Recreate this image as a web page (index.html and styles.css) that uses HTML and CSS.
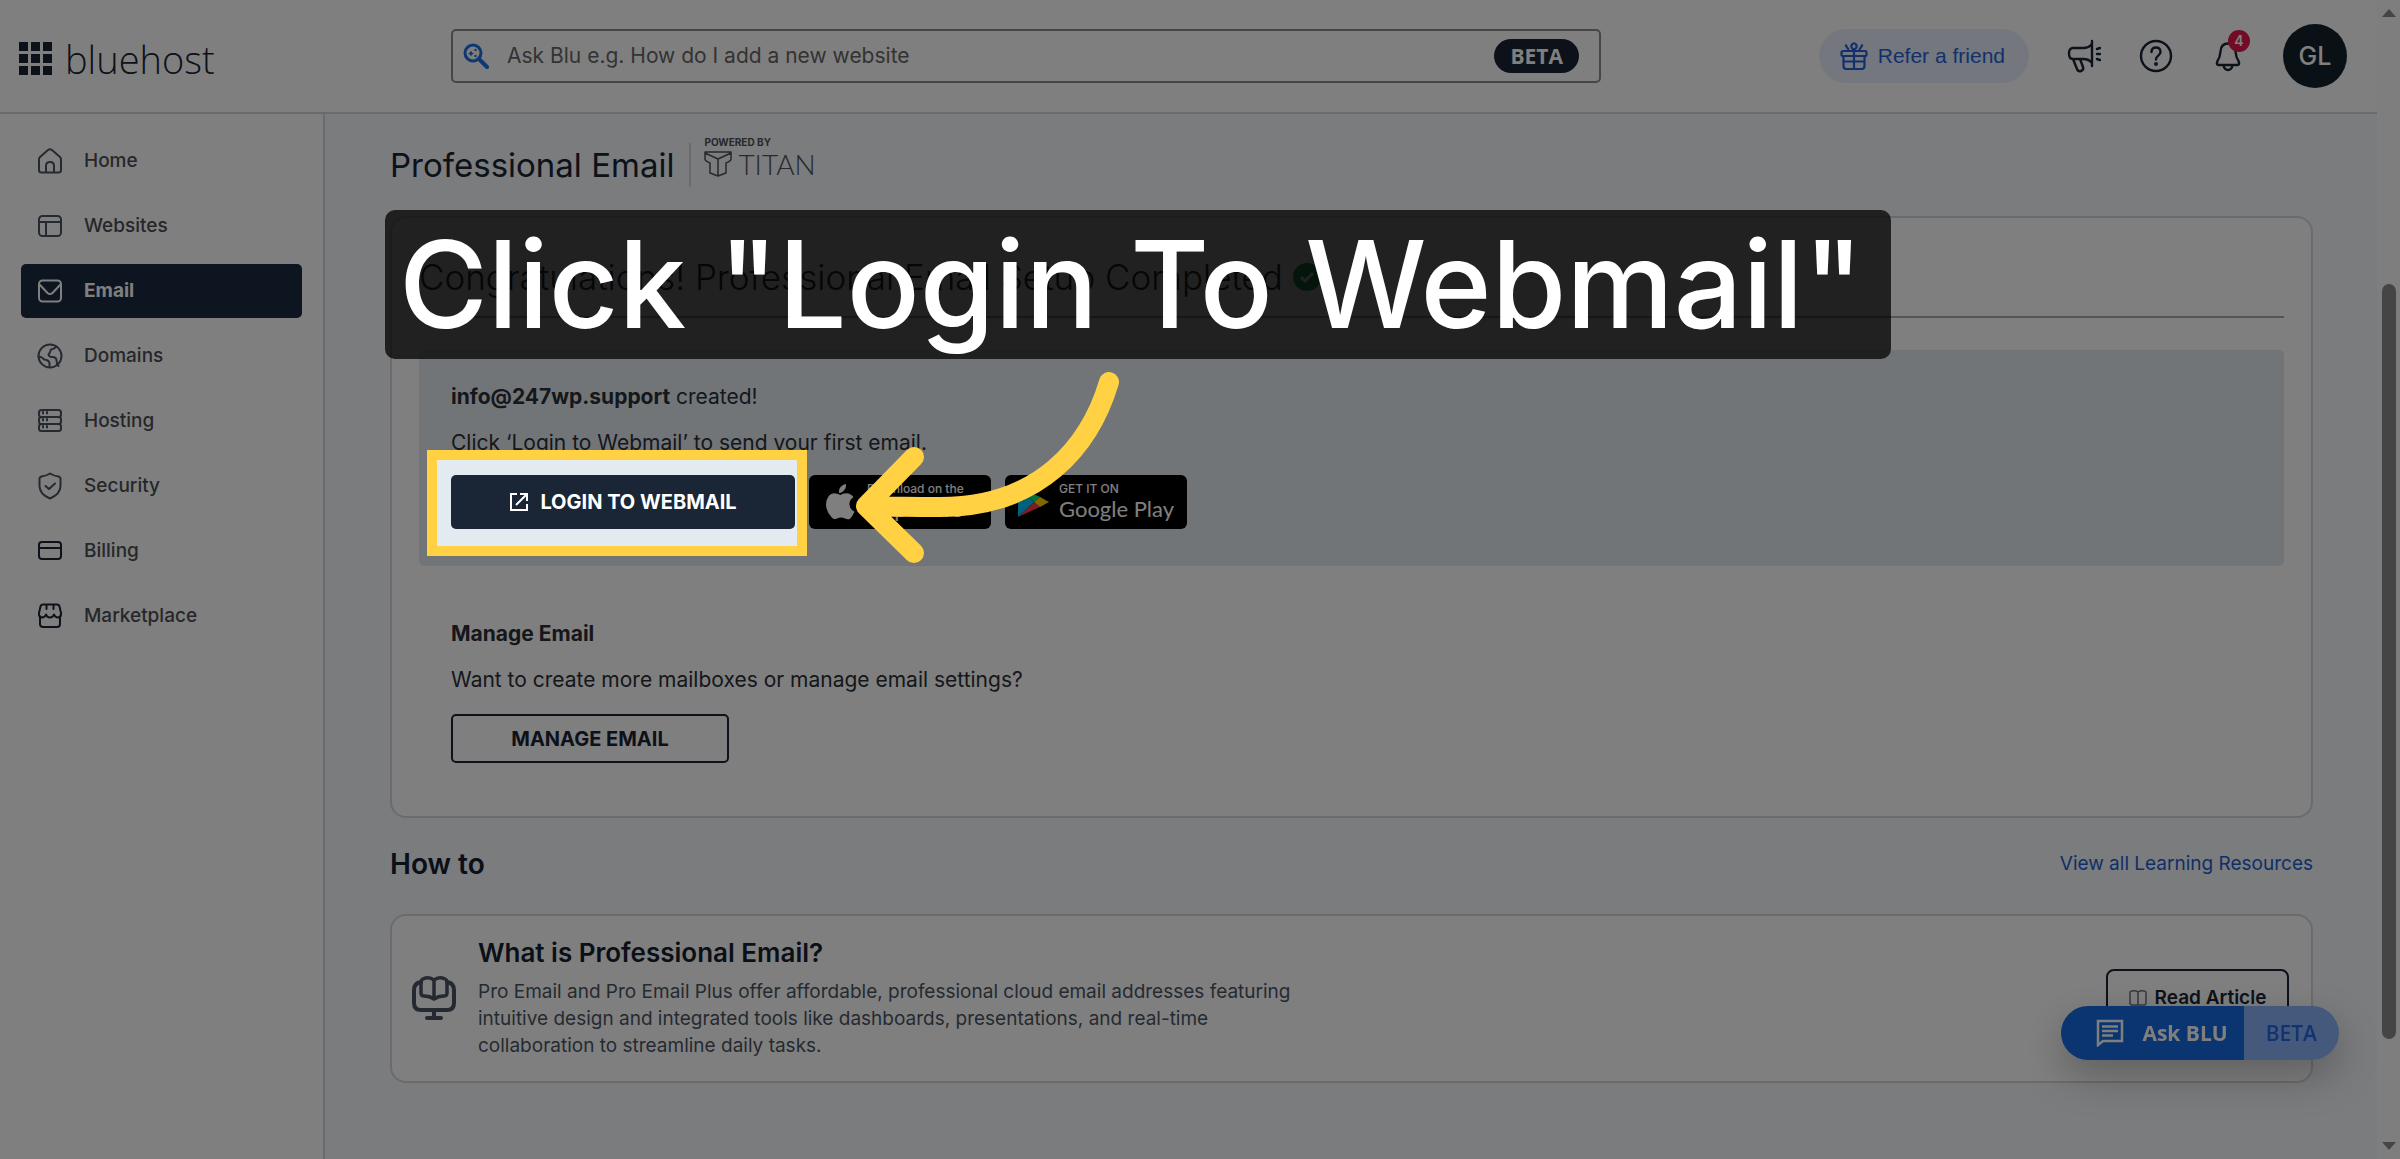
FILE: index.html
```html
<!DOCTYPE html>
<html lang="en">
<head>
  <meta charset="UTF-8">
  <meta name="viewport" content="width=device-width, initial-scale=1.0">
  <title>Professional Email</title>
  <link rel="stylesheet" href="styles.css">
</head>
<body>
  <header class="header">
    <a href="#" class="logo">
      <svg width="33" height="33" viewBox="0 0 33 33" fill="currentColor" aria-hidden="true">
        <path d="M0 0h9v9H0zM12 0h9v9h-9zM24 0h9v9h-9zM0 12h9v9H0zM12 12h9v9h-9zM24 12h9v9h-9zM0 24h9v9H0zM12 24h9v9h-9zM24 24h9v9h-9z"/>
      </svg>
      <span>bluehost</span>
    </a>

    <form class="search">
      <svg width="26" height="26" viewBox="0 0 26 26" fill="none" stroke="#1f6fe5" stroke-width="3" aria-hidden="true">
        <circle cx="10" cy="10" r="8"/>
        <path d="M16 16l8 8" stroke-width="4" stroke-linecap="round"/>
        <path d="M8 7.500l1 2 2 1-2 1-1 2-1-2-2-1 2-1z" fill="#1f6fe5" stroke="none"/>
        <circle cx="12.500" cy="7" r="1.200" fill="#1f6fe5" stroke="none"/>
        <circle cx="12.500" cy="13" r="1.200" fill="#1f6fe5" stroke="none"/>
      </svg>
      <input type="text" aria-label="Ask Blu" placeholder="Ask Blu e.g. How do I add a new website">
      <span class="beta-pill">BETA</span>
    </form>

    <div class="header-actions">
      <button class="refer">
        <svg width="28" height="28" viewBox="0 0 28 28" fill="none" stroke="currentColor" stroke-width="2.200" stroke-linejoin="round" aria-hidden="true">
          <rect x="1.500" y="9" width="25" height="5" rx="1.500"/>
          <path d="M3.500 14v10q0 3 3 3h15q3 0 3-3V14M14 9v18M3.500 19.500h21M14 8q-4-3-2-5.500 2-2.500 4 0Q18 5 14 8zM9 8Q7 6 5.500 2.500M19 8q2-2 3.500-5.500"/>
        </svg>
        Refer a friend
      </button>
      <button class="icon-btn" aria-label="Announcements">
        <svg width="34" height="34" viewBox="0 0 34 34" fill="none" stroke="currentColor" stroke-width="2.400" stroke-linejoin="round" stroke-linecap="round" aria-hidden="true">
          <path d="M25 2v25M25 5q-3 4-9 4H6q-4 0-4 5.500T6 20h10q6 0 9 4M6 20l4 10q1 3 4 2t2-4l-3-8"/>
          <path d="M30 10l3-1M30 15h3M30 20l3 1"/>
        </svg>
      </button>
      <button class="icon-btn" aria-label="Help">
        <svg width="34" height="34" viewBox="0 0 34 34" fill="none" stroke="currentColor" stroke-width="2.400" stroke-linecap="round" aria-hidden="true">
          <circle cx="17" cy="17" r="15"/>
          <path d="M12.500 13q0-4.500 4.500-4.500t4.500 4.500q0 2-2.200 3.600T17 20.500"/>
          <circle cx="17" cy="25" r=".8" fill="currentColor"/>
        </svg>
      </button>
      <button class="icon-btn bell" aria-label="Notifications">
        <svg width="26" height="32" viewBox="0 0 26 32" fill="none" stroke="currentColor" stroke-width="2.400" stroke-linejoin="round" aria-hidden="true">
          <path d="M13 3.500q-7 0-7.500 8-.5 6-3 9.500-1.500 4 1 4h19q2.500 0 1-4-2.500-3.500-3-9.500-.5-8-7.500-8zM8.500 25.500q1 4.500 4.500 4.500t4.500-4.500"/>
        </svg>
        <span class="badge">4</span>
      </button>
      <button class="avatar">GL</button>
    </div>
  </header>

  <div class="layout">
    <nav class="sidebar">
      <a href="#" class="nav-item">
        <svg width="26" height="26" viewBox="0 0 26 26" aria-hidden="true"><path d="M2 11.500Q2 10 3 9l8-7q2-1.600 4 0l8 7q1 1 1 2.500V22q0 2.500-2.500 2.500h-17Q2 24.500 2 22zM9 24v-6q0-4 4-4t4 4v6"/></svg>
        Home
      </a>
      <a href="#" class="nav-item">
        <svg width="26" height="26" viewBox="0 0 26 26" aria-hidden="true"><rect x="2" y="3" width="22" height="20" rx="3.500"/><path d="M2 9h22M9 9v14"/></svg>
        Websites
      </a>
      <a href="#" class="nav-item active">
        <svg width="26" height="26" viewBox="0 0 26 26" aria-hidden="true"><rect x="2" y="2.500" width="22" height="21" rx="3.500"/><path d="M3 7l7.500 8q2.500 2 5 0L23 7"/></svg>
        Email
      </a>
      <a href="#" class="nav-item">
        <svg width="26" height="26" viewBox="0 0 26 26" aria-hidden="true"><circle cx="13" cy="13" r="11.500"/><path d="M19 4q-2 2-5 2.500-1 3.500-2.500 5 1 3 4 2.500 4 0 4 3.500t2 5.500M1.500 13.500q4 .5 5.500 3 5 .5 5.500 3.500V24"/></svg>
        Domains
      </a>
      <a href="#" class="nav-item">
        <svg width="26" height="26" viewBox="0 0 26 26" aria-hidden="true"><rect x="2" y="2" width="22" height="7" rx="2.500"/><rect x="2" y="9" width="22" height="7" rx="2.500"/><rect x="2" y="16" width="22" height="7" rx="2.500"/><path d="M6 4v1.500M10 4v1.500M6 11v1.500M10 11v1.500M6 18v1.500M10 18v1.500"/></svg>
        Hosting
      </a>
      <a href="#" class="nav-item">
        <svg width="26" height="28" viewBox="0 0 26 28" aria-hidden="true"><path d="M13 1.500Q9 4 4.500 4.500 2.500 5 2.500 7v7q0 8 10.500 12.500Q23.500 22 23.500 14V7q0-2-2-2.500Q17 4 13 1.500zM8.500 14l3.500 3 6-5.500"/></svg>
        Security
      </a>
      <a href="#" class="nav-item dark">
        <svg width="26" height="26" viewBox="0 0 26 26" aria-hidden="true"><rect x="2" y="4" width="22" height="17" rx="3"/><path d="M2 10h22"/></svg>
        Billing
      </a>
      <a href="#" class="nav-item dark">
        <svg width="26" height="26" viewBox="0 0 26 26" aria-hidden="true"><path d="M6 1.500h14q2 0 2.500 2L24 10q.5 4-3 4.500-3 0-4-3-1 3-4 3t-4-3q-1 3-4 3Q1.500 14 2 10l1.500-6.500q.5-2 2.500-2zM3 14v7q0 3 3 3h14q3 0 3-3v-7M9.500 2v4M16.500 2v4"/></svg>
        Marketplace
      </a>
    </nav>

    <main class="main">
      <div class="title-row">
        <h1>Professional Email</h1>
        <div class="powered">
          <span class="powered-label">POWERED BY</span>
          <span class="titan">
            <svg width="28" height="26" viewBox="0 0 28 26" fill="none" stroke="currentColor" stroke-width="1.500" stroke-linejoin="round" aria-hidden="true">
              <path d="M1 1h26v7q0 2-5 4v10l-8 3-8-3V12Q1 10 1 8zM1 2l13 6 13-6M14 8v17"/>
            </svg>
            TITAN
          </span>
        </div>
      </div>

      <section class="card setup">
        <h2 class="setup-title">
          Congratulations! Professional Email Setup Completed
          <svg width="28" height="28" viewBox="0 0 28 28" aria-hidden="true"><circle cx="14" cy="14" r="14" fill="#23a455"/><path d="M8 14l4 4 8-8" fill="none" stroke="#fff" stroke-width="3"/></svg>
        </h2>
        <div class="created">
          <p><strong>info@247wp.support</strong> created!</p>
          <p>Click ‘Login to Webmail’ to send your first email.</p>
          <div class="buttons">
            <div class="spotlight">
              <button class="btn btn-login">
                <svg width="20" height="20" viewBox="0 0 20 20" fill="none" stroke="currentColor" stroke-width="2" aria-hidden="true"><path d="M8 2H2v16h16v-6M11 2h7v7M18 2L7 13"/></svg>
                LOGIN TO WEBMAIL
              </button>
            </div>
            <a href="#" class="store">
              <svg width="30" height="36" viewBox="0 0 30 36" fill="currentColor" aria-hidden="true"><path d="M21 0q.5 4-2 6.500T14 9q-.5-4 2-6.500T21 0zM15.500 11q2-1.800 6-1.800 4.500.3 7 4-4.500 2.800-4 7.500.5 5 5 7-2 4.500-4.500 7Q23 36 20 34.500q-4-1.800-8 0-3 1.500-5-.8Q1 27.500 1 20.500 1.500 10 9 9.200q3.500 0 6.500 1.800z"/></svg>
              <span><small>Download on the</small><b>App Store</b></span>
            </a>
            <a href="#" class="store store-google">
              <svg width="32" height="32" viewBox="0 0 32 32" aria-hidden="true"><path d="M1 1v30l16-15z" fill="#00c3ff"/><path d="M1 1l16 15 6-5z" fill="#00e676"/><path d="M1 31l16-15 6 5z" fill="#ff3a44"/><path d="M23 11l-6 5 6 5 9-5z" fill="#ffd000"/></svg>
              <span><small>GET IT ON</small><b>Google Play</b></span>
            </a>
          </div>
        </div>
        <div class="manage">
          <h3>Manage Email</h3>
          <p>Want to create more mailboxes or manage email settings?</p>
          <button class="btn btn-outline">MANAGE EMAIL</button>
        </div>
      </section>

      <div class="howto-row">
        <h2>How to</h2>
        <a href="#">View all Learning Resources</a>
      </div>

      <article class="card article">
        <svg class="article-icon" width="46" height="46" viewBox="0 0 46 46" fill="none" stroke="currentColor" stroke-width="4" stroke-linejoin="round" stroke-linecap="round" aria-hidden="true">
          <path d="M10 7q-7 1-7 8v13q0 7 7 7h26q7 0 7-7V15q0-7-7-8M23 35v8M16 43h14"/>
          <path d="M23 5q-5-4-11-1-2 1-2 3v11q0 3 3 3 6 0 10 3 4-3 10-3 3 0 3-3V7q0-2-2-3-6-3-11 1zM23 5v19" stroke-width="3.500"/>
        </svg>
        <div class="article-text">
          <h3>What is Professional Email?</h3>
          <p>Pro Email and Pro Email Plus offer affordable, professional cloud email addresses featuring intuitive design and integrated tools like dashboards, presentations, and real-time collaboration to streamline daily tasks.</p>
        </div>
        <button class="read-btn">
          <svg width="18" height="18" viewBox="0 0 18 18" fill="none" stroke="#6b7280" stroke-width="1.500" aria-hidden="true"><path d="M9 3Q6 1 3 2 1 2 1 4v10q0 2 2 2h12q2 0 2-2V4q0-2-2-2-3-1-6 1v13"/></svg>
          Read Article
        </button>
      </article>
    </main>
  </div>

  <button class="ask-blu">
    <span class="ask-label">
      <svg width="28" height="28" viewBox="0 0 28 28" fill="none" stroke="currentColor" stroke-width="2.500" aria-hidden="true"><path d="M2 2h24v20H7l-5 4zM6 7.500h16M6 12h16M6 16.500h11"/></svg>
      Ask BLU
    </span>
    <span class="ask-beta">BETA</span>
  </button>

  <div class="scrollbar">
    <span class="arrow-up"></span>
    <span class="thumb"></span>
    <span class="arrow-down"></span>
  </div>

  <div class="caption">Click "Login To Webmail"</div>
  <svg class="pointer" width="280" height="220" viewBox="0 0 280 220" fill="none" stroke="#ffd143" stroke-width="20" stroke-linecap="round" stroke-linejoin="round" aria-hidden="true">
    <path d="M259 22C240 86 190 147 90 147Q55 147 16 146M64 97L16 146l48 47"/>
  </svg>
</body>
</html>
```

FILE: styles.css
```css
:root {
  --navy: #1a2535;
  --text: #2b2f36;
  --muted: #4b5563;
  --blue: #1f5fd0;
  --border: #d5d6df;
  --page-bg: #f6f8fc;
  --yellow: #ffd143;
}

* {
  box-sizing: border-box;
}

body {
  margin: 0;
  min-height: 100vh;
  padding-right: 23px;
  display: flex;
  flex-direction: column;
  font-family: Inter, "Liberation Sans", sans-serif;
  font-size: 21px;
  line-height: 28px;
  color: var(--text);
  background-color: #fff;
  overflow: hidden;
}

h1, h2, h3, p {
  margin: 0;
}

a {
  text-decoration: none;
  color: inherit;
}

button {
  font: inherit;
  color: inherit;
  cursor: pointer;
}

svg {
  flex-shrink: 0;
}

/* Header */
.header {
  display: flex;
  align-items: center;
  padding: 24px 30px 24px 19px;
  border-bottom: 2px solid var(--border);
}

.logo {
  width: 432px;
  display: flex;
  align-items: center;
  gap: 13px;
  padding-top: 5px;
  color: var(--navy);
  font-family: "Open Sans", sans-serif;
  font-size: 38px;
  font-weight: 300;
}

.search {
  flex: 0 1 1150px;
  height: 54px;
  display: flex;
  align-items: center;
  gap: 18px;
  padding: 0 20px 0 10px;
  border: 2px solid #8b8d91;
  border-radius: 5px;
}

.search input {
  flex: 1;
  border: none;
  outline: none;
  padding: 0;
  font: inherit;
  background: none;
}

.search input::placeholder {
  color: #666;
  opacity: 1;
}

.beta-pill {
  padding: 3px 16px;
  border-radius: 17px;
  background-color: var(--navy);
  color: #fff;
  font-family: "Open Sans", sans-serif;
  font-weight: 700;
  font-size: 21px;
}

.header-actions {
  margin-left: auto;
  display: flex;
  align-items: center;
  color: var(--navy);
}

.refer {
  display: flex;
  align-items: center;
  gap: 10px;
  height: 54px;
  padding: 0 24px 0 21px;
  margin-right: 38px;
  border: none;
  border-radius: 27px;
  background-color: #e8effc;
  color: #2563d9;
  font-family: "Liberation Sans", sans-serif;
}

.icon-btn {
  display: flex;
  padding: 0;
  border: none;
  background: none;
  margin-right: 38px;
}

.bell {
  position: relative;
  margin: 0 42px 0 4px;
}

.badge {
  position: absolute;
  top: -10px;
  right: -9px;
  width: 22px;
  height: 22px;
  border-radius: 50%;
  background-color: #e3174c;
  color: #fff;
  font-size: 14px;
  font-weight: 600;
  line-height: 22px;
}

.avatar {
  width: 64px;
  height: 64px;
  padding: 0;
  border: none;
  border-radius: 50%;
  background-color: #12232d;
  color: #fff;
  font-size: 25px;
  font-weight: 500;
}

/* Sidebar */
.layout {
  flex: 1;
  display: flex;
}

.sidebar {
  flex: 0 0 325px;
  display: flex;
  flex-direction: column;
  gap: 11px;
  padding: 20px 21px;
  border-right: 2px solid var(--border);
}

.nav-item {
  display: flex;
  align-items: center;
  gap: 21px;
  height: 54px;
  padding: 0 16px;
  border-radius: 5px;
  font-size: 19px;
  font-weight: 500;
  color: #4d4f55;
}

.nav-item svg {
  fill: none;
  stroke: var(--muted);
  stroke-width: 2;
  stroke-linejoin: round;
  stroke-linecap: round;
}

.nav-item.dark svg {
  stroke: var(--navy);
}

.nav-item.active {
  background-color: #1b2a42;
  color: #fff;
  font-weight: 700;
}

.nav-item.active svg {
  stroke: #fff;
}

/* Main */
.main {
  flex: 1;
  padding: 22px 64px 22px 65px;
  background-color: var(--page-bg);
}

.title-row {
  display: flex;
  align-items: flex-end;
}

.title-row h1 {
  margin-top: 7px;
  padding-right: 15px;
  border-right: 2px solid var(--border);
  color: var(--navy);
  font-size: 33px;
  font-weight: 400;
  line-height: 44px;
}

.powered {
  align-self: flex-start;
  display: flex;
  flex-direction: column;
  padding-left: 13px;
  color: #505154;
}

.powered-label {
  font-size: 10px;
  font-weight: 700;
  line-height: 12px;
}

.titan {
  display: flex;
  align-items: center;
  gap: 6px;
  font-family: Lato, sans-serif;
  font-size: 28px;
  font-weight: 300;
  line-height: 32px;
}

.card {
  border: 2px solid var(--border);
  border-radius: 16px;
  background-color: #fff;
}

.setup {
  margin-top: 29px;
  padding: 37px 27px 53px;
}

.setup-title {
  display: flex;
  align-items: center;
  gap: 10px;
  padding-bottom: 17px;
  border-bottom: 2px solid #a9abb0;
  font-size: 35px;
  font-weight: 300;
  line-height: 44px;
}

.created {
  display: flex;
  flex-direction: column;
  gap: 18px;
  margin-top: 32px;
  padding: 33px 32px 37px;
  border-radius: 5px;
  background-color: #e3ebf0;
}

.buttons {
  display: flex;
  gap: 14px;
}

.spotlight {
  position: relative;
}

/* Dims everything outside the yellow frame */
.spotlight::after {
  content: "";
  position: absolute;
  inset: -25px -12px -27px -24px;
  z-index: 10;
  border: 10px solid var(--yellow);
  box-shadow: 0 0 0 4000px rgba(0, 0, 0, 0.5);
  pointer-events: none;
}

.btn {
  display: flex;
  align-items: center;
  justify-content: center;
  border-radius: 5px;
  font-size: 20px;
  font-weight: 700;
}

.btn-login {
  gap: 11px;
  width: 344px;
  height: 54px;
  border: none;
  background-color: var(--navy);
  color: #fff;
}

.btn-outline {
  width: 278px;
  height: 49px;
  margin-top: 20px;
  border: 2px solid var(--navy);
  background: none;
  color: var(--navy);
}

.store {
  display: flex;
  align-items: center;
  gap: 12px;
  width: 182px;
  height: 54px;
  padding: 0 8px 0 16px;
  border-radius: 6px;
  background-color: #000;
  color: #fff;
}

.store span {
  display: flex;
  flex-direction: column;
}

.store small {
  font-size: 12px;
  line-height: 14px;
  font-weight: 500;
  white-space: nowrap;
}

.store b {
  font-family: Lato, sans-serif;
  font-size: 22px;
  line-height: 26px;
  font-weight: 400;
  white-space: nowrap;
}

.store-google {
  gap: 10px;
  padding-left: 12px;
}

.manage {
  padding: 54px 32px 0;
}

.manage h3 {
  margin-bottom: 18px;
  font-size: 21px;
  font-weight: 700;
  line-height: 28px;
}

/* Learning resources */
.howto-row {
  display: flex;
  align-items: center;
  justify-content: space-between;
  margin: 29px 0 33px;
}

.howto-row h2 {
  color: #15202f;
  font-size: 28px;
  font-weight: 600;
  line-height: 34px;
}

.howto-row a {
  color: var(--blue);
  font-size: 19px;
}

.article {
  display: flex;
  align-items: center;
  gap: 21px;
  padding: 20px 22px 22px 19px;
}

.article-icon {
  color: #4a5362;
}

.article-text {
  flex: 0 1 820px;
}

.article h3 {
  margin-bottom: 8px;
  color: #15202f;
  font-size: 26px;
  font-weight: 600;
  line-height: 34px;
}

.article p {
  color: var(--muted);
  font-size: 19px;
  line-height: 27px;
}

.read-btn {
  display: flex;
  align-items: center;
  justify-content: center;
  gap: 8px;
  width: 183px;
  height: 58px;
  margin-left: auto;
  padding: 0;
  border: 2px solid var(--navy);
  border-radius: 8px;
  background: none;
  color: var(--navy);
  font-size: 19px;
  font-weight: 600;
}

.ask-blu {
  position: fixed;
  right: 61px;
  bottom: 99px;
  display: flex;
  padding: 0;
  border: none;
  border-radius: 27px;
  overflow: hidden;
  box-shadow: 0 16px 40px rgba(0, 0, 0, 0.25);
  font-family: "Open Sans", sans-serif;
  font-size: 21px;
  line-height: 54px;
}

.ask-label {
  display: flex;
  align-items: center;
  gap: 18px;
  padding: 0 16px 0 35px;
  background-color: #176be0;
  color: #fff;
  font-weight: 700;
}

.ask-beta {
  padding: 0 22px;
  background-color: #8bb2fa;
  color: #2269e0;
  font-weight: 600;
}

.scrollbar {
  position: fixed;
  top: 0;
  right: 0;
  bottom: 0;
  width: 23px;
  background-color: #fcfcfc;
}

.scrollbar span {
  position: absolute;
  left: 5px;
}

.thumb {
  top: 284px;
  bottom: 120px;
  width: 14px;
  border-radius: 7px;
  background-color: #8b8b8b;
}

.arrow-up,
.arrow-down {
  border: 7px solid transparent;
}

.arrow-up {
  top: 2px;
  border-bottom: 8px solid #8b8b8b;
}

.arrow-down {
  bottom: 2px;
  border-top: 8px solid #8b8b8b;
}

/* Annotations over the dimmed page */
.caption {
  position: absolute;
  top: 210px;
  left: 385px;
  z-index: 11;
  padding: 0 28px 0 14px;
  border-radius: 10px;
  background-color: rgba(0, 0, 0, 0.74);
  color: #fff;
  font-size: 121px;
  font-weight: 500;
  line-height: 149px;
  white-space: nowrap;
}

.pointer {
  position: absolute;
  top: 360px;
  left: 850px;
  z-index: 12;
}
```
